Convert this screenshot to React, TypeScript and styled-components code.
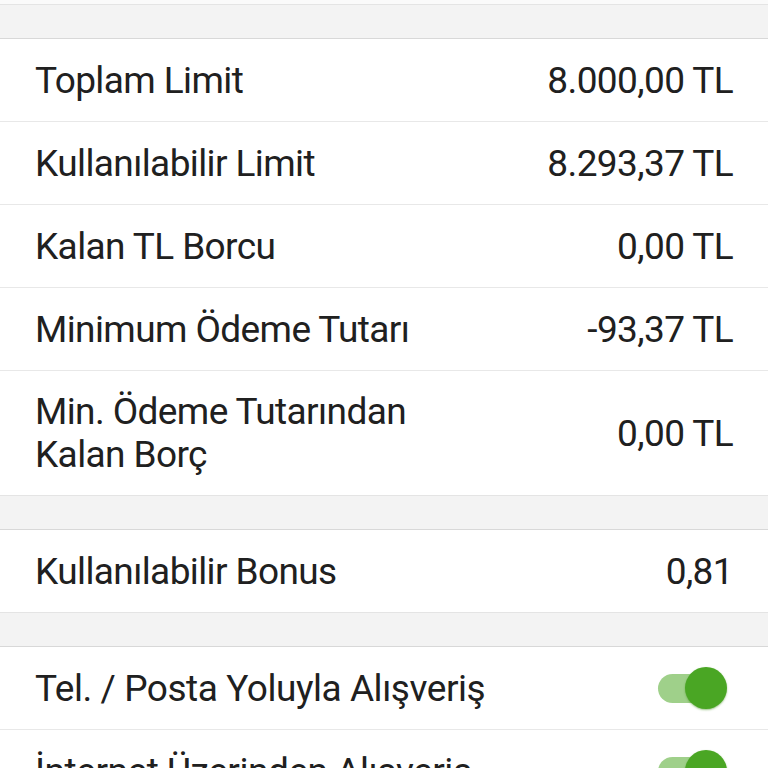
import React from "react";
import styled, { createGlobalStyle } from "styled-components";

const GlobalStyle = createGlobalStyle`
  html, body {
    margin: 0;
    padding: 0;
    background: #ffffff;
  }
  body {
    font-family: Roboto, "Noto Sans", Arial, sans-serif;
    color: #1b1b1b;
    overflow: hidden;
  }
`;

interface IRow {
  label: string[];
  value?: string;
  toggle?: boolean;
}

const groups: IRow[][] = [
  [
    { label: ["Toplam Limit"], value: "8.000,00 TL" },
    { label: ["Kullanılabilir Limit"], value: "8.293,37 TL" },
    { label: ["Kalan TL Borcu"], value: "0,00 TL" },
    { label: ["Minimum Ödeme Tutarı"], value: "-93,37 TL" },
    { label: ["Min. Ödeme Tutarından", "Kalan Borç"], value: "0,00 TL" },
  ],
  [{ label: ["Kullanılabilir Bonus"], value: "0,81" }],
  [
    { label: ["Tel. / Posta Yoluyla Alışveriş"], toggle: true },
    { label: ["İnternet Üzerinden Alışveriş"], toggle: true },
  ],
];

const App: React.FC = () => {
  return (
    <>
      <GlobalStyle />
      <Screen>
        <TopEdge />
        {groups.map((rows, gi) => (
          <React.Fragment key={gi}>
            <Spacer />
            <Group>
              {rows.map((row, ri) => (
                <Row key={ri} $last={ri === rows.length - 1}>
                  <Label $condensed={!row.toggle}>
                    {row.label.map((line, li) => (
                      <span key={li}>{line}</span>
                    ))}
                  </Label>
                  {row.toggle ? (
                    <Switch aria-label={row.label[0]}>
                      <Track />
                      <Thumb />
                    </Switch>
                  ) : (
                    <Value>{row.value}</Value>
                  )}
                </Row>
              ))}
            </Group>
          </React.Fragment>
        ))}
      </Screen>
    </>
  );
};

const Screen = styled.div`
  width: 768px;
  height: 768px;
  overflow: hidden;
  display: flex;
  flex-direction: column;
  background: #ffffff;
`;

const TopEdge = styled.div`
  height: 4px;
  flex-shrink: 0;
  background: #fafafa;
`;

const Spacer = styled.div`
  flex-shrink: 0;
  height: 33px;
  background: #f3f3f3;
  border-top: 1px solid #e4e4e4;
  border-bottom: 1px solid #d8d8d8;
`;

const Group = styled.div`
  display: flex;
  flex-direction: column;
  flex-shrink: 0;
`;

const Row = styled.div<{ $last: boolean }>`
  display: flex;
  align-items: center;
  justify-content: space-between;
  padding: 19px 35px 19px 35px;
  min-height: 44px;
  border-bottom: ${(p) => (p.$last ? "none" : "1px solid #e8e8e8")};
`;

const Label = styled.div<{ $condensed: boolean }>`
  display: flex;
  flex-direction: column;
  font-size: 37px;
  line-height: 43px;
  font-weight: 400;
  color: #202020;
  letter-spacing: ${(p) => (p.$condensed ? "-0.6px" : "-0.45px")};
`;

const Value = styled.div`
  font-size: 37px;
  line-height: 43px;
  color: #202020;
  letter-spacing: -0.6px;
  white-space: nowrap;
`;

const Switch = styled.div`
  position: relative;
  width: 70px;
  height: 44px;
  margin-right: 6px;
`;

const Track = styled.div`
  position: absolute;
  left: 1px;
  top: 8px;
  width: 56px;
  height: 29px;
  border-radius: 15px;
  background: #9fd08a;
`;

const Thumb = styled.div`
  position: absolute;
  right: 0;
  top: 1px;
  width: 42px;
  height: 42px;
  border-radius: 50%;
  background: #4aa624;
  box-shadow: 0 1px 2px rgba(60, 140, 20, 0.5);
`;

export default App;
